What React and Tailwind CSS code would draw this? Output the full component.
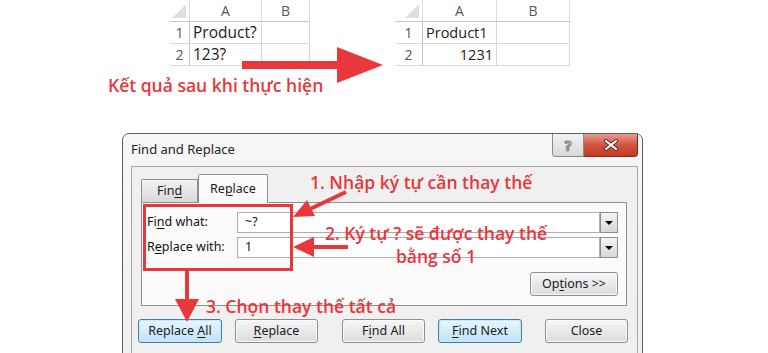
import React from "react";

const red = "#e8383b";
const note = { color: red, fontFamily: "'Open Sans', sans-serif" };

function Sheet({ rows, colW, rnW, size, right }) {
  return (
    <div className="flex flex-col" style={{ fontFamily: "'Open Sans', sans-serif" }}>
      <div className="flex h-[22px] border-b border-[#c8c8c8]">
        <div className="relative border-r border-[#dcdcdc]" style={{ width: rnW }}>
          <div className="absolute right-[3px] bottom-[3px] w-0 h-0 border-l-[14px] border-l-transparent border-b-[14px] border-b-[#dfdfdf]" />
        </div>
        {["A", "B"].map((c, i) => (
          <div key={c} className="flex items-center justify-center text-[14px] text-[#555] border-r border-[#dcdcdc]" style={{ width: colW[i] }}>
            {c}
          </div>
        ))}
      </div>
      {rows.map((r, i) => (
        <div key={i} className="flex h-[22px] border-b border-[#d9d9d9]">
          <div className="flex items-center justify-center text-[14px] text-[#555] border-r border-[#bfbfbf]" style={{ width: rnW }}>
            {i + 1}
          </div>
          <div
            className={`flex items-center px-[3px] text-[#222] border-r border-[#d9d9d9] ${right && i === 1 ? "justify-end" : ""}`}
            style={{ width: colW[0], fontSize: size }}
          >
            {r}
          </div>
          <div className="border-r border-[#d9d9d9]" style={{ width: colW[1] }} />
        </div>
      ))}
    </div>
  );
}

function U({ children }) {
  return <span className="underline underline-offset-2">{children}</span>;
}

function Btn({ children, w, blue }) {
  return (
    <div
      className={`h-[24px] flex items-center justify-center rounded-[3px] border text-[12.5px] text-[#1a1a1a] ${
        blue
          ? "border-[#3c7fb1] bg-gradient-to-b from-[#eaf6fd] to-[#bfe3f7] shadow-[inset_0_0_0_1px_#c9e7f8]"
          : "border-[#8e8e8e] bg-gradient-to-b from-[#f6f6f6] to-[#dcdcdc] shadow-[inset_0_0_0_1px_#fbfbfb]"
      }`}
      style={{ width: w }}
    >
      <span>{children}</span>
    </div>
  );
}

function Combo({ value }) {
  return (
    <div className="flex h-[21px] w-[381px]">
      <div className="flex-1 border border-[#abadb3] bg-white flex items-center pl-[7px] text-[12.5px] text-[#111]">{value}</div>
      <div className="w-[18px] border border-[#8e8e8e] bg-gradient-to-b from-[#f4f4f4] to-[#d8d8d8] flex items-center justify-center">
        <div className="w-0 h-0 border-l-[4px] border-r-[4px] border-t-[4px] border-l-transparent border-r-transparent border-t-black" />
      </div>
    </div>
  );
}

export default function App() {
  return (
    <div className="relative w-[768px] h-[353px] overflow-hidden bg-white">
      {/* top: before / after */}
      <div className="h-[133px] flex flex-col">
        <div className="flex">
          <div className="ml-[170px]">
            <Sheet rows={["Product?", "123?"]} colW={[72, 48]} rnW={20} size={15.5} />
          </div>
          <div className="ml-[85px]">
            <Sheet rows={["Product1", "1231"]} colW={[74, 73]} rnW={28} size={14.5} right />
          </div>
        </div>
        <div className="ml-[108px] mt-[7px] text-[17.5px] font-semibold leading-[24px]" style={note}>
          Kết quả sau khi thực hiện
        </div>
      </div>

      {/* dialog */}
      <div
        className="ml-[122px] w-[521px] h-[240px] border border-[#5e5e5e] rounded-t-[7px] bg-gradient-to-b from-[#f7f7f7] to-[#eef0f2] flex flex-col"
        style={{ fontFamily: "'Noto Sans', 'Open Sans', sans-serif" }}
      >
        <div className="h-[32px] flex items-start justify-between">
          <div className="pl-[8px] pt-[6px] text-[13px] text-[#222]">Find and Replace</div>
          <div className="flex mr-[4px]">
            <div className="w-[32px] h-[23px] border border-t-0 border-[#8a8a8a] rounded-bl-[4px] bg-gradient-to-b from-[#f2f2f2] to-[#d9d9d9] flex items-center justify-center text-[14px] font-bold text-[#e8e8e8] [-webkit-text-stroke:1px_#707070]">
              ?
            </div>
            <div className="w-[54px] h-[23px] border border-t-0 border-l-0 border-[#7a2a20] rounded-br-[4px] bg-gradient-to-b from-[#e89a8c] via-[#d2533f] to-[#c23a22] flex items-center justify-center">
              <svg width="16" height="12" viewBox="0 0 16 12">
                <path d="M3 2 L13 10 M13 2 L3 10" stroke="#5a2a22" strokeWidth="4" strokeLinecap="round" />
                <path d="M3 2 L13 10 M13 2 L3 10" stroke="#ffffff" strokeWidth="2.2" strokeLinecap="round" />
              </svg>
            </div>
          </div>
        </div>
        <div className="ml-[8px] mr-[4px] flex-1 border border-[#a6a6a6] bg-[#f0f0f0] pl-[9px] pt-[7px]">
          <div className="flex items-end h-[28px]">
            <div className="w-[57px] h-[23px] border border-b-0 border-[#8e8f8f] bg-gradient-to-b from-[#f3f3f3] to-[#d9d9d9] flex items-center justify-center text-[12.5px] text-[#1a1a1a] rounded-tl-[2px]">
              <span>
                Fin<U>d</U>
              </span>
            </div>
            <div className="relative z-10 -mb-px w-[70px] h-[29px] border border-b-0 border-[#8e8f8f] bg-[#fbfbfb] flex items-center justify-center text-[12.5px] text-[#1a1a1a] rounded-t-[2px]">
              <span>
                Re<U>p</U>lace
              </span>
            </div>
          </div>
          <div className="w-[486px] h-[104px] border border-[#8e8f8f] bg-[#fbfbfb] pt-[9px] pl-[5px] pr-[8px] flex flex-col">
            <div className="flex items-center">
              <div className="w-[90px] text-[12.5px] text-[#111]">
                Fi<U>n</U>d what:
              </div>
              <Combo value="~?" />
            </div>
            <div className="flex items-center mt-[4px]">
              <div className="w-[90px] text-[12.5px] text-[#111]">
                R<U>e</U>place with:
              </div>
              <Combo value="1" />
            </div>
            <div className="flex justify-end mt-[14px]">
              <Btn w={88}>
                Op<U>t</U>ions &gt;&gt;
              </Btn>
            </div>
          </div>
          <div className="flex mt-[13px] -ml-[3px]">
            <Btn w={84} blue>
              Replace <U>A</U>ll
            </Btn>
            <div className="ml-[13px]">
              <Btn w={83}>
                <U>R</U>eplace
              </Btn>
            </div>
            <div className="ml-[24px]">
              <Btn w={83}>
                F<U>i</U>nd All
              </Btn>
            </div>
            <div className="ml-[13px]">
              <Btn w={84} blue>
                <U>F</U>ind Next
              </Btn>
            </div>
            <div className="ml-[23px]">
              <Btn w={83}>Close</Btn>
            </div>
          </div>
        </div>
      </div>

      {/* annotations */}
      <div className="absolute left-[143px] top-[204px] w-[150px] h-[67px] border-[3px]" style={{ borderColor: red }} />
      <div className="absolute left-[310px] top-[171px] text-[17.5px] font-semibold leading-[22px]" style={note}>
        1. Nhập ký tự cần thay thế
      </div>
      <div
        className="absolute left-[306px] top-[222px] w-[260px] text-center text-[17.5px] font-semibold leading-[23px]"
        style={note}
      >
        2. Ký tự ? sẽ được thay thế
        <br />
        bằng số 1
      </div>
      <div className="absolute left-[206px] top-[295px] text-[17.5px] font-semibold leading-[22px]" style={note}>
        3. Chọn thay thế tất cả
      </div>
      <svg className="absolute left-0 top-0 pointer-events-none" width="768" height="353">
        <g fill={red} stroke="none">
          <polygon points="242,61 337,61 337,47 383,65 337,83 337,69 242,69" />
          <polygon points="293,217 315,216 307,200" />
          <polygon points="293,247 314,237 314,257" />
          <polygon points="187,322 175,299 199,299" />
        </g>
        <g stroke={red} strokeWidth="4">
          <line x1="346" y1="192" x2="310" y2="209" />
          <line x1="348" y1="247" x2="312" y2="247" />
          <line x1="187" y1="271" x2="187" y2="301" />
        </g>
      </svg>
    </div>
  );
}
